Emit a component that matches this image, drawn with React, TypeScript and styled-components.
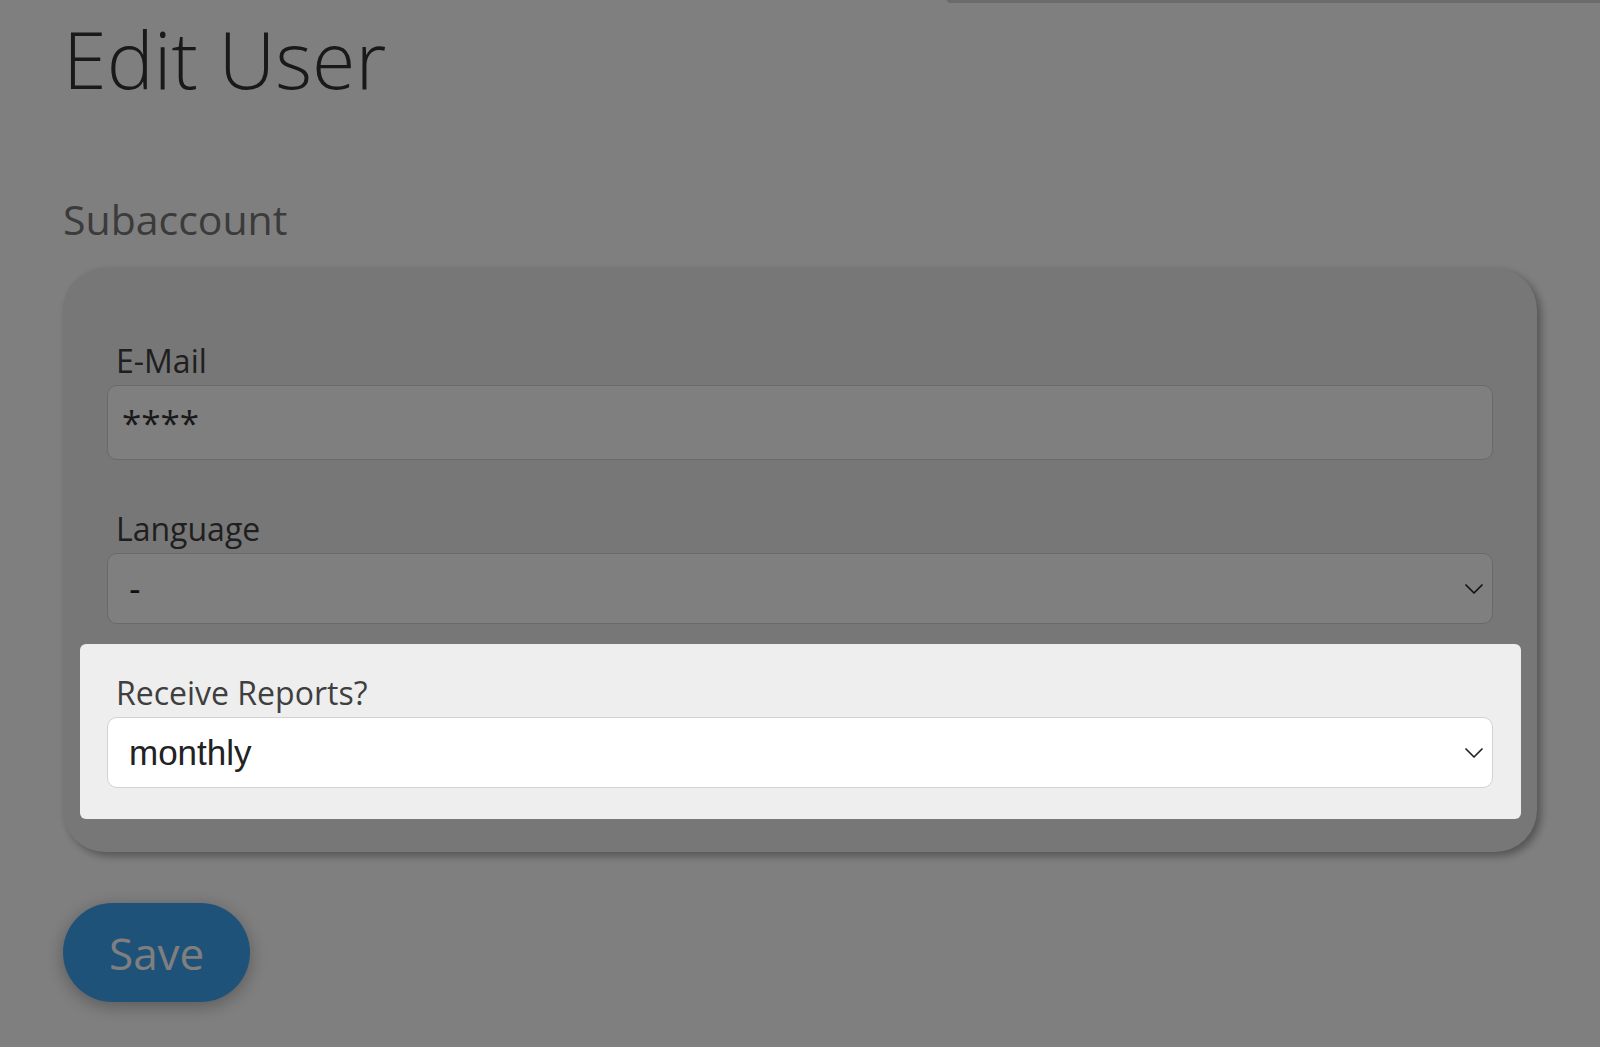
import styled, { createGlobalStyle } from "styled-components";

const GlobalStyle = createGlobalStyle`
  *, *::before, *::after {
    box-sizing: border-box;
  }

  html,
  body {
    margin: 0;
    padding: 0;
  }

  body {
    background: #ffffff;
    color: #333333;
    font-family: "Open Sans", "Noto Sans", sans-serif;
  }
`;

// dims the whole page while the tour step is shown
const Backdrop = styled.div`
  position: fixed;
  inset: 0;
  background: rgba(0, 0, 0, 0.5);
  z-index: 100;
`;

const Page = styled.main`
  min-height: 1047px;
  padding: 0 63px;
`;

const TopRow = styled.div`
  display: flex;
  justify-content: flex-end;
  margin-right: -63px;
`;

const TopStrip = styled.div`
  width: 653px;
  height: 3px;
  background: rgba(0, 0, 0, 0.16);
  border-bottom-left-radius: 3px;
`;

const Title = styled.h1`
  margin: 8px 0 0;
  font-size: 79px;
  font-weight: 300;
  line-height: 96px;
  color: #333333;
`;

const SectionTitle = styled.h2`
  margin: 88px 0 25px;
  font-size: 41px;
  font-weight: 400;
  line-height: 48px;
  color: #777777;
`;

const Card = styled.section`
  display: flex;
  flex-direction: column;
  gap: 45px;
  padding: 69px 44px 64px;
  background: #eeeeee;
  border-radius: 42px;
  box-shadow: 4px 4px 8px rgba(0, 0, 0, 0.35);
`;

const FormGroup = styled.div<{ $highlighted?: boolean }>`
  display: flex;
  flex-direction: column;

  ${({ $highlighted }) =>
    $highlighted &&
    `
    position: relative;
    z-index: 101;
    margin: -25px -28px -31px -27px;
    padding: 25px 28px 31px 27px;
    background: #eeeeee;
    border-radius: 6px;
  `}
`;

const Label = styled.label`
  display: block;
  padding-left: 9px;
  font-size: 32px;
  line-height: 48px;
  color: #3f3f3f;
`;

const TextInput = styled.input`
  width: 100%;
  height: 75px;
  padding: 0 14px;
  border: 1px solid #d2d2d2;
  border-radius: 10px;
  background: #ffffff;
  font-family: "Open Sans", "Noto Sans", sans-serif;
  font-size: 35px;
  color: #333333;
  outline: none;
`;

const SelectWrap = styled.div`
  position: relative;
`;

const Select = styled.select`
  appearance: none;
  width: 100%;
  height: 71px;
  padding: 0 56px 0 21px;
  border: 1px solid #d2d2d2;
  border-radius: 10px;
  background: #ffffff;
  font-family: "Liberation Sans", Arial, sans-serif;
  font-size: 35px;
  color: #222222;
  outline: none;
`;

const Chevron = styled.svg`
  position: absolute;
  top: 50%;
  right: 10px;
  width: 18px;
  height: 10px;
  transform: translateY(-50%);
  pointer-events: none;
`;

const SaveButton = styled.button`
  display: block;
  height: 99px;
  margin-top: 51px;
  padding: 0 46px;
  border: none;
  border-radius: 50px;
  background: #3da4f2;
  color: #ffffff;
  font-family: "Open Sans", "Noto Sans", sans-serif;
  font-size: 44px;
  line-height: 66px;
  box-shadow: 0 4px 18px rgba(0, 0, 0, 0.3);
  cursor: pointer;
`;

function SelectField({ value, options }: { value: string; options: string[] }) {
  return (
    <SelectWrap>
      <Select defaultValue={value}>
        {options.map((o) => (
          <option key={o} value={o}>
            {o}
          </option>
        ))}
      </Select>
      <Chevron viewBox="0 0 18 10" fill="none">
        <polyline
          points="1,1 9,9 17,1"
          stroke="#222222"
          strokeWidth="1.7"
          strokeLinecap="round"
          strokeLinejoin="round"
        />
      </Chevron>
    </SelectWrap>
  );
}

export default function App() {
  return (
    <>
      <GlobalStyle />
      <Page>
        <TopRow>
          <TopStrip />
        </TopRow>
        <Title>Edit User</Title>
        <SectionTitle>Subaccount</SectionTitle>
        <Card>
          <FormGroup>
            <Label>E-Mail</Label>
            <TextInput type="text" defaultValue="****" readOnly />
          </FormGroup>
          <FormGroup>
            <Label>Language</Label>
            <SelectField value="-" options={["-", "English", "Deutsch"]} />
          </FormGroup>
          <FormGroup $highlighted>
            <Label>Receive Reports?</Label>
            <SelectField
              value="monthly"
              options={["never", "daily", "weekly", "monthly"]}
            />
          </FormGroup>
        </Card>
        <SaveButton type="button">Save</SaveButton>
      </Page>
      <Backdrop />
    </>
  );
}
